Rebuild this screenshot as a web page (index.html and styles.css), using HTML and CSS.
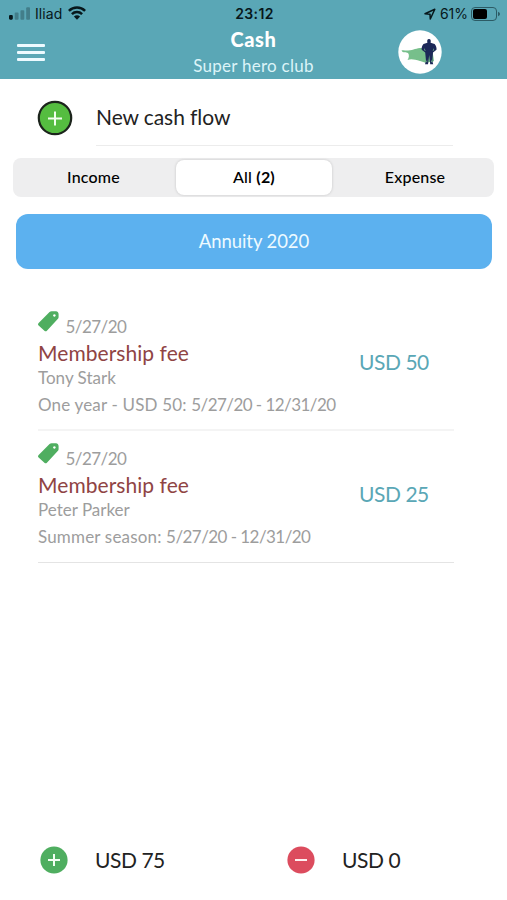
FILE: index.html
```
<!DOCTYPE html>
<html lang="en">
<head>
<meta charset="utf-8">
<title>Cash</title>
<link rel="stylesheet" href="styles.css">
</head>
<body>
<header class="header">
  <div class="status">
    <div class="status-left">
      <svg class="signal" viewBox="0 0 22 13"><rect x="0" y="8" width="4" height="5" rx="1.2"/><g opacity=".28"><rect x="6" y="5.5" width="4" height="7.5" rx="1"/><rect x="12" y="3" width="4" height="10" rx="1"/><rect x="18" y="0" width="4" height="13" rx="1"/></g></svg>
      <span class="carrier">Iliad</span>
      <svg class="wifi" viewBox="0 0 18 14"><g fill="none" stroke="#07171b" stroke-width="2.5"><path d="M.9 4.9a11.6 11.6 0 0 1 16.2 0"/><path d="M3.9 8.2a7.3 7.3 0 0 1 10.2 0"/></g><path d="M9 13.8 5.9 10.6a4.5 4.5 0 0 1 6.2 0z"/></svg>
    </div>
    <span class="time">23:12</span>
    <div class="status-right">
      <svg class="location" viewBox="0 0 12 12"><path d="M1 5.8 10.8 1.2 6.3 11 6 6.2z" fill="none" stroke="#07171b" stroke-width="1.5" stroke-linejoin="round"/></svg>
      <span class="percent">61%</span>
      <svg class="battery" viewBox="0 0 29 14"><rect x=".5" y=".5" width="25" height="13" rx="3.5" fill="none" stroke="#2c5b65"/><rect x="2" y="2" width="14" height="10" rx="2" fill="#000"/><path d="M27 4.8q2 .8 2 2.2t-2 2.2z" fill="#2c5b65"/></svg>
    </div>
  </div>
  <div class="nav">
    <div class="menu"><i></i><i></i><i></i></div>
    <div class="heading">
      <h1 class="title">Cash</h1>
      <p class="subtitle">Super hero club</p>
    </div>
    <svg class="avatar" viewBox="0 0 44 44"><circle cx="22" cy="22" r="21.7" fill="#fff"/><path d="M3.500 20.500c2-.7 4 .2 6.500 0 6-.5 8-2.500 14-2.500l10 0 2 13c-2 1.500-4 .5-6 1.500-3 1-5-1-8-1.500-5-1-8-2.500-12.500-1 1.500-2.500 2-5 .5-7-2-1-5 .5-6.500-2.500z" fill="#77bf8b"/><path d="M31 9c1.700 0 2.100 1.500 1.600 3.800l4 1.200c1.400 1.600 2.200 4 1.900 5.800L35 22.500 34.300 31l.9 3.200h-3L31.200 25l-1.200 9.200h-3l1-3.200-.8-8.500-3.500-2.700c-.3-1.800.4-4.200 1.800-5.800l3.900-1.200C28.900 10.500 29.300 9 31 9z" fill="#1c2858"/><path d="M26.300 18v2.200l1.400.9zM35.900 18v2.200l-1.300.9zM29.200 29.500l-1 2.500 1 .3zM33.200 29.500l1 2.500-1 .3z" fill="#77bf8b"/></svg>
  </div>
</header>
<main class="content">
  <div class="new-flow">
    <svg class="add" viewBox="0 0 36 36"><circle cx="18" cy="18" r="16.200" fill="#55bd40" stroke="#1c241c" stroke-width="2.200"/><path d="M11 18.500h14M18 11.500v14" stroke="#f2ffee" stroke-width="2"/></svg>
    <div class="new-label">New cash flow</div>
  </div>
  <div class="segments">
    <div class="segment income">Income</div>
    <div class="segment active">All <b>(2)</b></div>
    <div class="segment expense">Expense</div>
  </div>
  <div class="period">Annuity 2020</div>
  <section class="list">
    <article class="entry">
      <div class="details">
        <div class="date"><svg class="tag" viewBox="0 0 20 20"><path fill-rule="evenodd" d="M11 1Q11.800.3 13 .3h4.200q1 0 1.600.7.800.8.800 1.800v3.200q0 1-.8 1.700L8.500 18.800q-1.200 1.200-2.400 0L.6 13.800q-1.200-1.200 0-2.400zM15.600 3a1.200 1.200 0 1 0 .01 0z"/></svg><span class="dates">5/27/20</span></div>
        <h2 class="name">Membership fee</h2>
        <p class="person">Tony Stark</p>
        <p class="note">One year - USD 50: <span class="dates">5/27/20 - 12/31/20</span></p>
      </div>
      <div class="amount">USD 50</div>
    </article>
    <article class="entry">
      <div class="details">
        <div class="date"><svg class="tag" viewBox="0 0 20 20"><path fill-rule="evenodd" d="M11 1Q11.800.3 13 .3h4.200q1 0 1.600.7.800.8.800 1.800v3.200q0 1-.8 1.700L8.500 18.800q-1.200 1.200-2.400 0L.6 13.800q-1.200-1.200 0-2.400zM15.600 3a1.200 1.200 0 1 0 .01 0z"/></svg><span class="dates">5/27/20</span></div>
        <h2 class="name">Membership fee</h2>
        <p class="person">Peter Parker</p>
        <p class="note">Summer season: <span class="dates">5/27/20 - 12/31/20</span></p>
      </div>
      <div class="amount">USD 25</div>
    </article>
  </section>
</main>
<footer class="totals">
  <div class="total"><svg class="badge" viewBox="0 0 28 28"><circle cx="14" cy="14" r="13.600" fill="#4fae60"/><path d="M8 14h12M14 8v12" stroke="#f4fff4" stroke-width="2"/></svg><span class="sum">USD 75</span></div>
  <div class="total"><svg class="badge" viewBox="0 0 28 28"><circle cx="14" cy="14" r="13.600" fill="#dc4c5e"/><path d="M8 14h12" stroke="#fff0f0" stroke-width="2"/></svg><span class="sum">USD 0</span></div>
</footer>
</body>
</html>
```
FILE: styles.css
```
* { box-sizing: border-box; }
body {
  margin: 0;
  height: 900px;
  display: flex;
  flex-direction: column;
  background: #fff;
  color: #222;
  font-family: Lato, "Liberation Sans", sans-serif;
  overflow: hidden;
}
h1, h2, p { margin: 0; font-weight: 400; }
svg { display: block; flex: none; }
.header { height: 79px; background: #5aa7b6; }
.status {
  height: 27px;
  display: grid;
  grid-template-columns: 1fr auto 1fr;
  align-items: center;
  padding: 0 7px 0 9px;
  font: 14px/27px Inter, sans-serif;
  color: #07171b;
}
.status-left, .status-right { display: flex; align-items: center; }
.status-right { justify-content: flex-end; }
.signal { width: 21px; height: 13px; margin-right: 5px; fill: #07171b; }
.carrier { letter-spacing: .1px; }
.wifi { width: 18px; height: 14px; margin: -2px 0 0 6px; fill: #07171b; }
.time { font-weight: 600; letter-spacing: .4px; }
.location { width: 12px; height: 12px; margin-right: 4px; }
.battery { width: 29px; height: 14px; margin-left: 3px; }
.nav {
  display: grid;
  grid-template-columns: 103px 301px 103px;
  height: 52px;
}
.menu { display: flex; flex-direction: column; gap: 4.5px; padding: 17px 0 0 17px; }
.menu i { width: 28px; height: 2.6px; border-radius: 1px; background: #edfaff; }
.heading { text-align: center; color: #fff; }
.title { font-size: 20px; line-height: 25px; font-weight: 900; letter-spacing: .6px; }
.subtitle { font-size: 17px; line-height: 28px; letter-spacing: .27px; color: #dcf4f8; }
.avatar { width: 44px; height: 44px; margin: 3px 0 0 -6px; }
.content { flex: 1; }
.new-flow { display: flex; height: 67px; padding-left: 37px; }
.add { width: 36px; height: 36px; margin: 21px 23px 0 0; }
.new-label {
  width: 357px;
  border-bottom: 1px solid #ececec;
  font-size: 21px;
  line-height: 75px;
  letter-spacing: -.08px;
}
.segments {
  display: grid;
  grid-template-columns: 163px 156px 162px;
  height: 39px;
  margin: 12px 13px 0;
  padding: 2px 0;
  border-radius: 8px;
  background: #eeeeef;
  font-size: 16px;
  font-weight: 500;
  line-height: 33px;
  letter-spacing: .18px;
  text-align: center;
  color: #000;
}
.segment.income { padding-right: 2px; }
.segment.expense { padding-left: 4px; }
.segment.active { border-radius: 8px; background: #fff; box-shadow: 0 0 3px rgba(0, 0, 0, .18); }
.period {
  height: 55px;
  margin: 17px 15px 0 16px;
  border-radius: 12px;
  background: #5cb1ef;
  color: #edfaff;
  font-size: 18.5px;
  line-height: 54px;
  letter-spacing: -.08px;
  text-align: center;
}
.list { margin: 30px 53px 0 38px; }
.entry { display: flex; height: 132px; padding-top: 14px; border-bottom: 2px solid #f4f4f4; }
.entry + .entry { border-bottom: 1px solid #e4e4e4; }
.details { width: 321px; color: #9d9d9d; font-size: 17px; white-space: nowrap; }
.date { display: flex; line-height: 27px; height: 26px; }
.tag { width: 21px; height: 21px; margin: -2px 6.5px 0 0; fill: #4fae60; }
.dates { letter-spacing: -.55px; }
.name { font-size: 21px; line-height: 28px; letter-spacing: .06px; color: #8f4444; }
.person { line-height: 22px; }
.note { line-height: 31px; letter-spacing: .17px; }
.amount { font-size: 21px; line-height: 98px; letter-spacing: -.45px; color: #5aa7b6; }
.totals { display: grid; grid-template-columns: 247px 1fr; height: 80px; padding-left: 40px; }
.total { display: flex; align-items: center; font-size: 21px; letter-spacing: -.45px; }
.badge { width: 28px; height: 28px; margin-right: 27px; }
.sum { padding-bottom: 2px; }
```
